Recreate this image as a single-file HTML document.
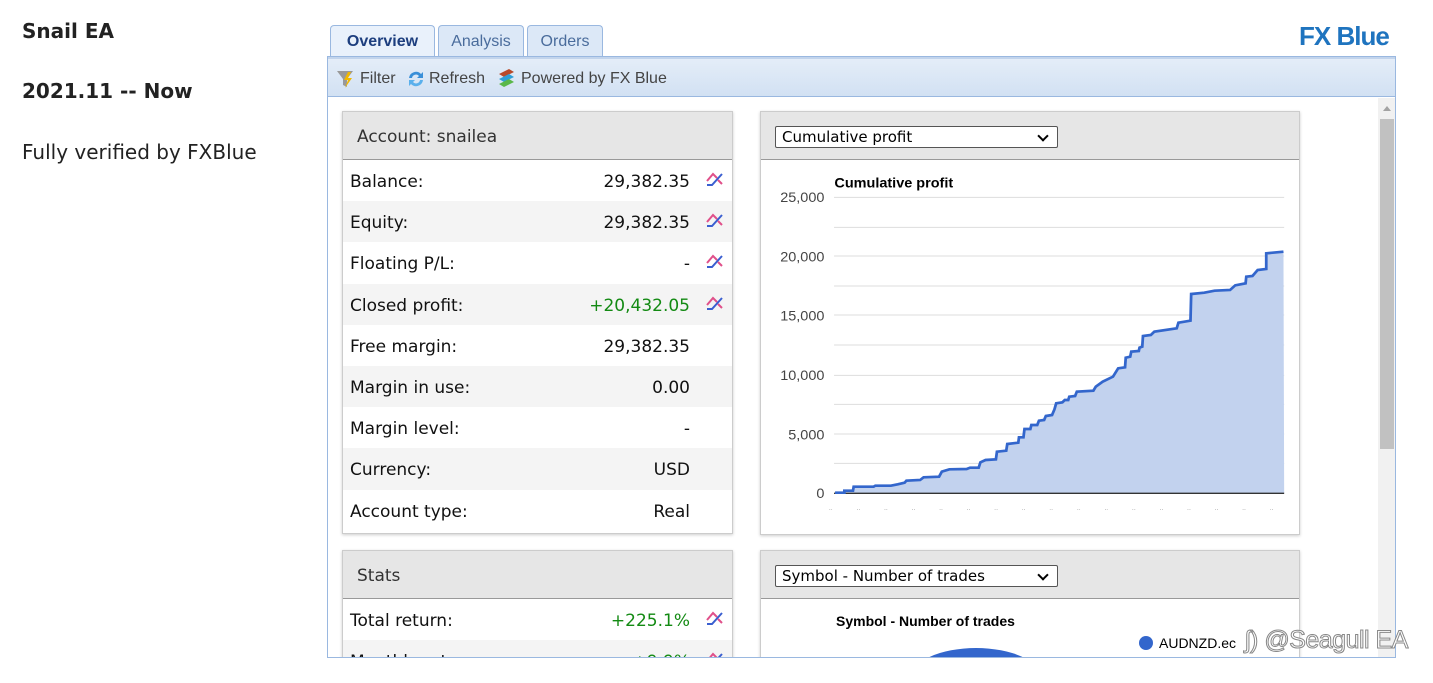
<!DOCTYPE html>
<html><head><meta charset="utf-8"><style>
*{margin:0;padding:0;box-sizing:border-box}
body{width:1433px;height:683px;overflow:hidden;background:#fff;font-family:"Liberation Sans",sans-serif;position:relative}
.a{position:absolute}
.side{font-family:"DejaVu Sans","Liberation Sans",sans-serif;color:#222;font-size:20px}
.tab{position:absolute;top:25px;height:32px;border:1px solid #9ab8e0;border-bottom:none;border-radius:4px 4px 0 0;background:#dce8f7;color:#4a6c9c;font-size:16px;text-align:center;line-height:32px}
.panel{position:absolute;background:#fff;border:1px solid #ccc;box-shadow:0 1px 3px rgba(0,0,0,.2)}
.ph{height:48px;background:#e6e6e6;border-bottom:1px solid #999;font-family:"DejaVu Sans",sans-serif;font-size:17px;color:#333;padding-left:14px;line-height:50px}
.row{height:41.2px;position:relative;font-family:"DejaVu Sans",sans-serif;font-size:17px;color:#111;line-height:44px}
.row .l{position:absolute;left:7px}
.row .v{position:absolute;right:42px}
.row svg{position:absolute;right:7px;top:11px}
.g{color:#138a13}
.sel{position:absolute;left:14px;top:14px;width:283px;height:22px;border:1px solid #555;border-radius:2px;background:#fff;font-size:15px;line-height:20px;padding-left:6px;color:#000}
.sel:after{content:"";position:absolute;right:10px;top:5px;width:6px;height:6px;border-right:2px solid #000;border-bottom:2px solid #000;transform:rotate(45deg)}
</style></head><body>
<div class="a side" style="left:22px;top:19px;font-weight:bold">Snail EA</div>
<div class="a side" style="left:22px;top:79px;font-weight:bold">2021.11 -- Now</div>
<div class="a side" style="left:22px;top:140px">Fully verified by FXBlue</div>

<div class="tab" style="left:330px;width:105px;background:#e9f1fb;color:#1d3e7e;font-weight:bold;height:33px">Overview</div>
<div class="tab" style="left:438px;width:86px">Analysis</div>
<div class="tab" style="left:527px;width:76px">Orders</div>
<div class="a" style="left:1299px;top:21px;font-size:26px;font-weight:bold;color:#1f74bf;letter-spacing:-1px">FX Blue</div>

<div class="a" style="left:327px;top:56px;width:1069px;height:602px;border:1px solid #9ab8e0;overflow:hidden">
 <div class="a" style="left:0;top:0;width:1067px;height:40px;background:linear-gradient(#e4edf8,#d2e1f3);border-top:2px solid #c2d4ec;border-bottom:1px solid #9ab8e0;font-size:16px;color:#444;line-height:40px">
  <svg class="a" style="left:8px;top:10px" width="20" height="20"><path d="M1 2h16l-6 8v8l-4-2v-6z" fill="#999"/><path d="M12 3l-4 8h4l-3 8 7-10h-4l3-6z" fill="#f2b800"/></svg>
  <span class="a" style="left:32px">Filter</span>
  <svg class="a" style="left:78px;top:10px" width="20" height="20"><path d="M3 9a7 7 0 0 1 12-4l2-2v6h-6l2-2a4 4 0 0 0-7 2z" fill="#3a8fd8"/><path d="M17 11a7 7 0 0 1-12 4l-2 2v-6h6l-2 2a4 4 0 0 0 7-2z" fill="#5ab0ec"/></svg>
  <span class="a" style="left:101px">Refresh</span>
  <svg class="a" style="left:169px;top:9px" width="20" height="22"><path d="M2 6l10-5 5 3-10 5z" fill="#b84a2a"/><path d="M2 11l10-5 5 3-10 5z" fill="#2d9fd8"/><path d="M2 16l10-5 5 3-10 5z" fill="#5ab84a"/></svg>
  <span class="a" style="left:193px">Powered by FX Blue</span>
 </div>
 <div class="a" style="left:1050px;top:41px;width:17px;height:561px;background:#f1f1f1">
  <div class="a" style="left:5px;top:8px;border:4px solid transparent;border-bottom:5px solid #a3a3a3;border-top:none"></div>
  <div class="a" style="left:2px;top:21px;width:14px;height:330px;background:#c1c1c1"></div>
 </div>

 <div class="panel" style="left:14px;top:54px;width:391px;height:423px">
 <div class="ph">Account: snailea</div>
 <div class="row" style="background:#fff"><span class="l">Balance:</span><span class="v">29,382.35</span><svg width="20" height="16"><path d="M2 10l6-7 4 4" stroke="#e0508a" stroke-width="2" fill="none"/><path d="M2 14h5l10-11" stroke="#3a5fd0" stroke-width="2" fill="none"/><path d="M13 9l4 4" stroke="#e0508a" stroke-width="2"/></svg></div>
 <div class="row" style="background:#f4f4f4"><span class="l">Equity:</span><span class="v">29,382.35</span><svg width="20" height="16"><path d="M2 10l6-7 4 4" stroke="#e0508a" stroke-width="2" fill="none"/><path d="M2 14h5l10-11" stroke="#3a5fd0" stroke-width="2" fill="none"/><path d="M13 9l4 4" stroke="#e0508a" stroke-width="2"/></svg></div>
 <div class="row" style="background:#fff"><span class="l">Floating P/L:</span><span class="v">-</span><svg width="20" height="16"><path d="M2 10l6-7 4 4" stroke="#e0508a" stroke-width="2" fill="none"/><path d="M2 14h5l10-11" stroke="#3a5fd0" stroke-width="2" fill="none"/><path d="M13 9l4 4" stroke="#e0508a" stroke-width="2"/></svg></div>
 <div class="row" style="background:#f4f4f4"><span class="l">Closed profit:</span><span class="v g">+20,432.05</span><svg width="20" height="16"><path d="M2 10l6-7 4 4" stroke="#e0508a" stroke-width="2" fill="none"/><path d="M2 14h5l10-11" stroke="#3a5fd0" stroke-width="2" fill="none"/><path d="M13 9l4 4" stroke="#e0508a" stroke-width="2"/></svg></div>
 <div class="row" style="background:#fff"><span class="l">Free margin:</span><span class="v">29,382.35</span></div>
 <div class="row" style="background:#f4f4f4"><span class="l">Margin in use:</span><span class="v">0.00</span></div>
 <div class="row" style="background:#fff"><span class="l">Margin level:</span><span class="v">-</span></div>
 <div class="row" style="background:#f4f4f4"><span class="l">Currency:</span><span class="v">USD</span></div>
 <div class="row" style="background:#fff"><span class="l">Account type:</span><span class="v">Real</span></div>
 </div>

 <div class="panel" style="left:14px;top:493px;width:391px;height:130px">
 <div class="ph">Stats</div>
 <div class="row" style="background:#fff"><span class="l">Total return:</span><span class="v g">+225.1%</span><svg width="20" height="16"><path d="M2 10l6-7 4 4" stroke="#e0508a" stroke-width="2" fill="none"/><path d="M2 14h5l10-11" stroke="#3a5fd0" stroke-width="2" fill="none"/><path d="M13 9l4 4" stroke="#e0508a" stroke-width="2"/></svg></div>
 <div class="row" style="background:#f4f4f4"><span class="l">Monthly return:</span><span class="v g">+9.9%</span><svg width="20" height="16"><path d="M2 10l6-7 4 4" stroke="#e0508a" stroke-width="2" fill="none"/><path d="M2 14h5l10-11" stroke="#3a5fd0" stroke-width="2" fill="none"/><path d="M13 9l4 4" stroke="#e0508a" stroke-width="2"/></svg></div>
 </div>

 <div class="panel" style="left:432px;top:54px;width:540px;height:424px">
 <div class="ph" style="padding:0;position:relative"><div class="sel">Cumulative profit</div></div>
 </div>

 <div class="panel" style="left:432px;top:493px;width:540px;height:130px">
 <div class="ph" style="padding:0;position:relative"><div class="sel">Symbol - Number of trades</div></div>
 <div class="a" style="left:75px;top:62px;font-size:14px;font-weight:bold">Symbol - Number of trades</div>
 <div class="a" style="left:150px;top:97px;width:130px;height:60px;border-radius:50%;background:#3366cc"></div>
 <div class="a" style="left:378px;top:85px;width:14px;height:14px;border-radius:50%;background:#3366cc"></div>
 <div class="a" style="left:398px;top:84px;font-size:14px">AUDNZD.ec</div>
 </div>
</div>

<svg class="a" style="left:760px;top:170px" width="540" height="350" viewBox="0 0 1568 1050" preserveAspectRatio="none">
 <g stroke="#ddd" stroke-width="3"><line x1="215" y1="82" x2="1522" y2="82"/><line x1="215" y1="172" x2="1522" y2="172"/><line x1="215" y1="258" x2="1522" y2="258"/><line x1="215" y1="348" x2="1522" y2="348"/><line x1="215" y1="435" x2="1522" y2="435"/><line x1="215" y1="525" x2="1522" y2="525"/><line x1="215" y1="616" x2="1522" y2="616"/><line x1="215" y1="703" x2="1522" y2="703"/><line x1="215" y1="792" x2="1522" y2="792"/><line x1="215" y1="880" x2="1522" y2="880"/></g>
 <g font-family="Liberation Sans" font-size="42" fill="#444" text-anchor="end"><text x="187" y="96">25,000</text><text x="187" y="274">20,000</text><text x="187" y="452">15,000</text><text x="187" y="630">10,000</text><text x="187" y="808">5,000</text><text x="187" y="984">0</text></g>
 <text x="216" y="52" font-family="Liberation Sans" font-size="42" font-weight="bold">Cumulative profit</text>
 <polygon fill="#c2d2ee" points="218,968 245,968 245,962 270,962 272,950 330,950 335,947 380,947 400,943 420,938 425,932 465,930 475,922 520,920 528,905 550,898 600,897 610,893 635,893 640,877 655,870 685,868 688,845 715,842 718,822 750,818 752,802 765,802 768,777 785,777 788,765 805,765 810,752 825,750 830,738 848,735 855,718 860,700 878,697 885,690 895,690 898,680 915,678 920,665 968,662 975,650 995,635 1025,620 1040,595 1060,592 1062,563 1075,560 1078,545 1100,543 1102,533 1110,530 1112,498 1135,495 1145,485 1210,475 1215,458 1250,452 1252,372 1290,368 1320,362 1365,360 1380,346 1410,340 1412,320 1430,318 1445,300 1470,297 1470,250 1520,245 1522,970 218,970"/>
 <line x1="215" y1="970" x2="1522" y2="970" stroke="#333" stroke-width="4"/>
 <polyline fill="none" stroke="#3366cc" stroke-width="8" points="218,968 245,968 245,962 270,962 272,950 330,950 335,947 380,947 400,943 420,938 425,932 465,930 475,922 520,920 528,905 550,898 600,897 610,893 635,893 640,877 655,870 685,868 688,845 715,842 718,822 750,818 752,802 765,802 768,777 785,777 788,765 805,765 810,752 825,750 830,738 848,735 855,718 860,700 878,697 885,690 895,690 898,680 915,678 920,665 968,662 975,650 995,635 1025,620 1040,595 1060,592 1062,563 1075,560 1078,545 1100,543 1102,533 1110,530 1112,498 1135,495 1145,485 1210,475 1215,458 1250,452 1252,372 1290,368 1320,362 1365,360 1380,346 1410,340 1412,320 1430,318 1445,300 1470,297 1470,250 1520,245"/>
 <g fill="#999" font-size="20"><text x="200" y="1020">..</text><text x="280" y="1020">..</text><text x="360" y="1020">..</text><text x="440" y="1020">..</text><text x="520" y="1020">..</text><text x="600" y="1020">..</text><text x="680" y="1020">..</text><text x="760" y="1020">..</text><text x="840" y="1020">..</text><text x="920" y="1020">..</text><text x="1000" y="1020">..</text><text x="1080" y="1020">..</text><text x="1160" y="1020">..</text><text x="1240" y="1020">..</text><text x="1320" y="1020">..</text><text x="1400" y="1020">..</text><text x="1480" y="1020">..</text></g>
</svg>

<div class="a" style="left:1245px;top:626px;font-size:25px;color:#fff;-webkit-text-stroke:1px #888;letter-spacing:-0.5px">ʃ) @Seagull EA</div>
</body></html>
